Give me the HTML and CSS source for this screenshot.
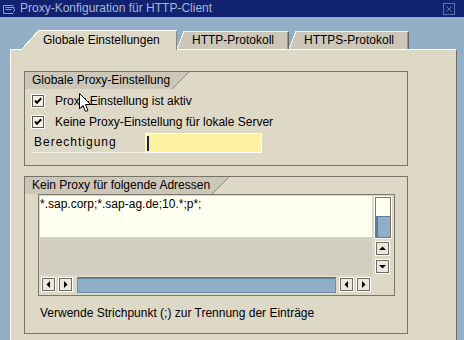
FILE: index.html
```html
<!DOCTYPE html>
<html>
<head>
<meta charset="utf-8">
<link rel="stylesheet" href="styles.css">
</head>
<body>
<div class="titlebar">
  <svg class="ticon" viewBox="0 0 14 12" width="14" height="12"><path d="M11.5 2.5 H1.5 V10.5 H11.5" fill="none" stroke="#8c9ad0"/><path d="M3.5 4.5 H12.5 M3.5 6.5 H9.5 M11 5 L13 7 L11 9" fill="none" stroke="#8c9ad0"/></svg>
  <span class="title">Proxy-Konfiguration für HTTP-Client</span>
  <svg class="close" viewBox="0 0 12 12" width="12" height="12"><rect x="0.5" y="0.5" width="11" height="11" fill="none" stroke="#5f70b4"/><path d="M3.5 3.5 L8.5 8.5 M8.5 3.5 L3.5 8.5" stroke="#5f70b4"/></svg>
</div>
<div class="main">
  <div class="tabs">
    <div class="tab active"><span class="tcorner"></span><span class="tlabel">Globale Einstellungen</span></div>
    <div class="tab tab-http"><span class="tcorner"></span><span class="tlabel">HTTP-Protokoll</span></div>
    <div class="tab tab-https"><span class="tcorner"></span><span class="tlabel">HTTPS-Protokoll</span></div>
  </div>
  <div class="panel">
    <div class="group g1">
      <div class="ghead"><span class="ghead-label">Globale Proxy-Einstellung</span><span class="ghead-corner"></span></div>
      <div class="g1body">
        <div class="crow">
          <svg class="cb" viewBox="0 0 14 14" width="14" height="14"><rect x="0.5" y="0.5" width="13" height="13" fill="none" stroke="#fff"/><rect x="1.5" y="1.5" width="11" height="11" fill="#f6f3eb" stroke="#5a5850"/><path d="M4 6.5 L6 8.7 L10.2 4.3" stroke="#000" stroke-width="2" fill="none"/></svg>
          <span>Proxy-Einstellung ist aktiv</span>
        </div>
        <div class="crow">
          <svg class="cb" viewBox="0 0 14 14" width="14" height="14"><rect x="0.5" y="0.5" width="13" height="13" fill="none" stroke="#fff"/><rect x="1.5" y="1.5" width="11" height="11" fill="#f6f3eb" stroke="#5a5850"/><path d="M4 6.5 L6 8.7 L10.2 4.3" stroke="#000" stroke-width="2" fill="none"/></svg>
          <span>Keine Proxy-Einstellung für lokale Server</span>
        </div>
        <div class="irow">
          <span class="ilabel">Berechtigung</span>
          <span class="input"><span class="caret"></span></span>
        </div>
      </div>
    </div>
    <div class="group g2">
      <div class="ghead"><span class="ghead-label">Kein Proxy für folgende Adressen</span><span class="ghead-corner"></span></div>
      <div class="tbl">
        <div class="tbl-top">
          <div class="tcol">
            <div class="cream">*.sap.corp;*.sap-ag.de;10.*;p*;</div>
            <div class="greyarea"></div>
          </div>
          <div class="vscroll">
            <div class="vtrack"><div class="vfree"></div><div class="vthumb"></div></div>
            <div class="sbtn"><svg viewBox="0 0 13 13" width="13" height="13"><path d="M3 8 H10 L6.5 4.5 Z" fill="#000"/></svg></div>
            <div class="sbtn"><svg viewBox="0 0 13 13" width="13" height="13"><path d="M3 5 H10 L6.5 8.5 Z" fill="#000"/></svg></div>
          </div>
        </div>
        <div class="hscroll">
          <div class="sbtn"><svg viewBox="0 0 13 13" width="13" height="13"><path d="M8 3 V10 L4.5 6.5 Z" fill="#000"/></svg></div>
          <div class="sbtn"><svg viewBox="0 0 13 13" width="13" height="13"><path d="M5 3 V10 L8.5 6.5 Z" fill="#000"/></svg></div>
          <div class="htrack"></div>
          <div class="sbtn"><svg viewBox="0 0 13 13" width="13" height="13"><path d="M8 3 V10 L4.5 6.5 Z" fill="#000"/></svg></div>
          <div class="sbtn"><svg viewBox="0 0 13 13" width="13" height="13"><path d="M5 3 V10 L8.5 6.5 Z" fill="#000"/></svg></div>
        </div>
      </div>
      <div class="hint">Verwende Strichpunkt (;) zur Trennung der Einträge</div>
    </div>
  </div>
</div>
<svg class="cursor" viewBox="0 0 13 20" width="13" height="20"><path d="M0.5 0.5 V16 L4 12.5 L6.5 18.5 L9 17.5 L6.5 11.5 H11.5 Z" fill="#fff" stroke="#000"/></svg>
</body>
</html>
```
FILE: styles.css
```css
* { box-sizing: border-box; }
html, body { margin: 0; padding: 0; }
body {
  width: 464px;
  height: 340px;
  overflow: hidden;
  background: #93afc5;
  font-family: "Liberation Sans", Arial, sans-serif;
  font-size: 12px;
  color: #000;
  position: relative;
}
.titlebar {
  height: 17px;
  background: #102270;
  display: flex;
  align-items: center;
  padding-left: 2px;
  color: #a9b6da;
}
.ticon { margin-right: 4px; }
.title { flex: 1; line-height: 17px; white-space: nowrap; }
.close { margin-right: 9px; }
.main { padding: 0 7px 0 10px; }
.tabs {
  height: 33px;
  display: flex;
  align-items: flex-end;
  padding-left: 12px;
  margin-bottom: -1px;
  position: relative;
  z-index: 1;
}
.tab { display: flex; height: 18px; margin-bottom: 1px; white-space: nowrap; }
.tab.active { height: 20px; width: 155px; margin-bottom: 0; }
.tab.active .tcorner {
  width: 17px;
  height: 19px;
  background: linear-gradient(to bottom right, transparent calc(50% - 0.5px), #fff calc(50% - 0.5px), #fff calc(50% + 0.6px), #ded8c7 calc(50% + 0.6px));
}
.tab.active .tlabel {
  flex: 1;
  background: #ded8c7;
  border-top: 1px solid #fff;
  box-shadow: inset -1px 0 0 #8a877c;
  line-height: 18px;
  padding-left: 4px;
}
.tab.active .tcorner { align-self: flex-start; }
.tab.active { background: linear-gradient(#ded8c7, #ded8c7) no-repeat 0 19px / 100% 1px; }
.tab-http { width: 112px; }
.tab-https { width: 120px; }
.tab-http .tcorner, .tab-https .tcorner {
  width: 7px;
  background: linear-gradient(to bottom right, transparent calc(50% - 0.5px), #f4f2ec calc(50% - 0.5px), #f4f2ec calc(50% + 0.6px), #ccc7b8 calc(50% + 0.6px));
}
.tab-http .tlabel, .tab-https .tlabel {
  flex: 1;
  background: #ccc7b8;
  border-top: 1px solid #f4f2ec;
  border-right: 1px solid #65635c;
  box-shadow: inset -1px 0 0 #9c998f;
  line-height: 17px;
  padding-left: 8px;
}
.panel {
  height: 291px;
  background: #ded8c7;
  border-top: 1px solid #fff;
  border-left: 1px solid #fff;
  border-right: 1px solid #6f6d66;
  padding: 21px 0 0 13px;
}
.group { width: 384px; border: 1px solid #767368; }
.g1 { height: 95px; }
.g2 { height: 158px; margin-top: 10px; }
.ghead { display: flex; height: 17px; }
.ghead-label {
  background: #ccc7b8;
  padding: 0 2px 0 7px;
  line-height: 17px;
  white-space: nowrap;
}
.ghead-corner {
  width: 17px;
  background: linear-gradient(to bottom right, #ccc7b8 calc(50% - 0.5px), #8a877c calc(50% - 0.5px), #8a877c calc(50% + 0.6px), transparent calc(50% + 0.6px));
}
.g1body { padding: 1px 0 0 6px; }
.crow { display: flex; align-items: center; height: 21px; gap: 10px; white-space: nowrap; }
.irow { display: flex; margin-top: 1px; height: 20px; }
.ilabel {
  width: 114px;
  padding-left: 3px;
  letter-spacing: 1px;
  line-height: 19px;
  border-bottom: 1px solid #f4f0e6;
}
.input {
  width: 117px;
  height: 20px;
  background: #fff1a0;
  border: 1px solid #fff;
  display: flex;
  align-items: center;
  padding-left: 1px;
}
.caret { width: 2px; height: 15px; background: #102270; }
.tbl {
  margin-left: 13px;
  width: 357px;
  height: 102px;
  border: 1px solid #7a776d;
  display: flex;
  flex-direction: column;
}
.tbl-top { display: flex; height: 80px; }
.tcol { margin: 1px 0 0 1px; width: 332px; }
.cream {
  height: 41px;
  background: #fffff0;
  line-height: 16px;
  white-space: nowrap;
}
.greyarea { height: 38px; background: #d2cec2; }
.vscroll { margin-left: 3px; width: 16px; display: flex; flex-direction: column; gap: 3px; padding-top: 2px; }
.vtrack { height: 41px; border: 1px solid #77756d; display: flex; flex-direction: column; background: #fffff0; box-shadow: 0 0 0 1px #fff; margin-bottom: 0; }
.vfree { height: 18px; }
.vthumb { flex: 1; background: #8eafc6; border-left: 2px solid #5f7d92; border-top: 1px solid #5f7d92; }
.sbtn {
  width: 15px;
  height: 15px;
  border: 1px solid #fff;
  box-shadow: inset 0 0 0 1px #6e6c64;
  background: #ede9de;
  display: flex;
}
.sbtn svg { margin: 0; }
.hscroll { display: flex; margin: 2px 0 0 2px; height: 16px; gap: 2px; }
.htrack {
  width: 259px;
  margin: 0 1px 0 2px;
  background: #8eafc6;
  border: 1px solid #6f8ca2;
  border-top: 2px solid #5f7d92;
}
.hint { margin: 9px 0 0 15px; line-height: 16px; white-space: nowrap; }
.cursor { position: absolute; left: 79px; top: 93px; }
```
